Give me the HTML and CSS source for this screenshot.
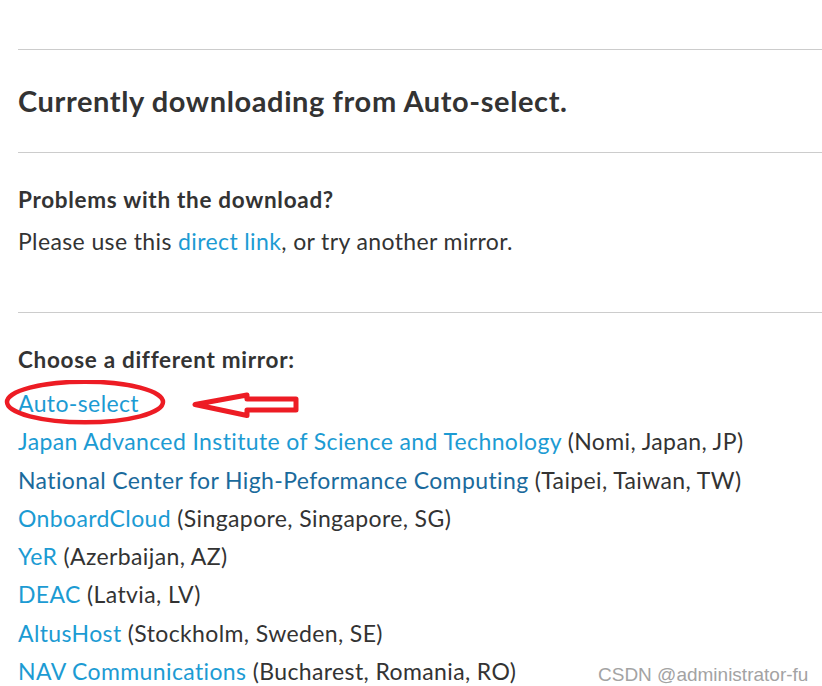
FILE: index.html
```html
<!DOCTYPE html>
<html>
<head>
<meta charset="utf-8">
<link rel="stylesheet" href="styles.css">
</head>
<body>
<div class="page">
  <section class="block block-first">
    <h2 class="title">Currently downloading from Auto-select.</h2>
  </section>
  <section class="block block-problems">
    <h3 class="subtitle">Problems with the download?</h3>
    <p class="text">Please use this <a class="link" href="#">direct link</a>, or try another mirror.</p>
  </section>
  <section class="block block-mirrors">
    <h3 class="subtitle">Choose a different mirror:</h3>
    <ul class="mirrors">
      <li class="mirror"><a class="link" href="#">Auto-select</a>
        <svg class="annot" width="310" height="56" viewBox="0 0 310 56">
          <ellipse cx="85" cy="22" rx="78" ry="20.3" fill="none" stroke="#ed1c24" stroke-width="4.5"/>
          <path d="M195 24.5 L247 15 L247 19 L296 19 L296 30 L247 30 L247 35.5 Z" fill="none" stroke="#ed1c24" stroke-width="5" stroke-linejoin="round"/>
        </svg>
      </li>
      <li class="mirror"><a class="link" href="#">Japan Advanced Institute of Science and Technology</a> (Nomi, Japan, JP)</li>
      <li class="mirror"><a class="link link-visited" href="#">National Center for High-Peformance Computing</a> (Taipei, Taiwan, TW)</li>
      <li class="mirror"><a class="link" href="#">OnboardCloud</a> (Singapore, Singapore, SG)</li>
      <li class="mirror"><a class="link" href="#">YeR</a> (Azerbaijan, AZ)</li>
      <li class="mirror"><a class="link" href="#">DEAC</a> (Latvia, LV)</li>
      <li class="mirror"><a class="link" href="#">AltusHost</a> (Stockholm, Sweden, SE)</li>
      <li class="mirror"><a class="link" href="#">NAV Communications</a> (Bucharest, Romania, RO)</li>
    </ul>
  </section>
</div>
<div class="watermark">CSDN @administrator-fu</div>
</body>
</html>
```
FILE: styles.css
```css
html, body {
  margin: 0;
  padding: 0;
  background: #ffffff;
  overflow: hidden;
}
body {
  font-family: Lato, "Open Sans", sans-serif;
  color: #333333;
  width: 822px;
  height: 686px;
  position: relative;
}
.page {
  margin-left: 18px;
  padding-top: 49px;
}
.block {
  border-top: 1px solid #cccccc;
  padding-top: 33px;
}
.block-first {
  padding-bottom: 33px;
}
.block-problems {
  padding-bottom: 56px;
}
.title {
  margin: 0;
  font-size: 29px;
  line-height: 36px;
  font-weight: 700;
  letter-spacing: 0.6px;
  color: #333333;
}
.subtitle {
  margin: 0;
  font-size: 22.5px;
  line-height: 28px;
  font-weight: 700;
  letter-spacing: 0.7px;
  color: #333333;
}
.text {
  margin: 12px 0 0;
  font-size: 23px;
  line-height: 30px;
  letter-spacing: 0.38px;
}
.link {
  color: #1c9bd3;
  text-decoration: none;
}
.link-visited {
  color: #1a6a9c;
}
.mirrors {
  list-style: none;
  margin: 10px 0 0;
  padding: 0;
}
.mirror {
  font-size: 23px;
  line-height: 38.3px;
  letter-spacing: 0.38px;
  white-space: nowrap;
  position: relative;
}
.annot {
  position: absolute;
  left: -18px;
  top: -4px;
}
.watermark {
  position: absolute;
  left: 598px;
  top: 665px;
  font-family: "Liberation Sans", Arial, sans-serif;
  font-size: 19px;
  line-height: 19px;
  color: #a3a3a3;
}
```
